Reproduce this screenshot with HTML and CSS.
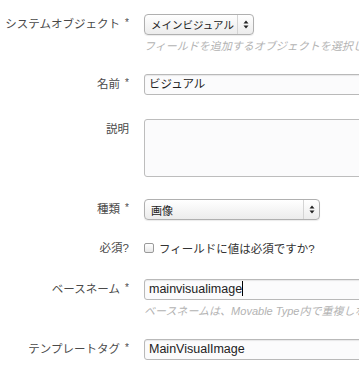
FILE: index.html
```html
<!DOCTYPE html>
<html lang="ja">
<head>
  <meta charset="UTF-8">
  <title>フィールドの編集</title>
  <link rel="stylesheet" href="styles.css">
</head>
<body>
  <form class="field-form">
    <!-- システムオブジェクト -->
    <div class="row row-obj">
      <label class="label">システムオブジェクト <span class="req">*</span></label>
      <div class="field">
        <div class="select select-obj">
          <span class="select-text">メインビジュアル</span>
          <span class="select-arrows">
            <svg width="6" height="9" viewBox="0 0 6 9"><path d="M3 0.5 L5.5 3.5 H0.5 Z M3 8.5 L5.5 5.5 H0.5 Z" fill="#222"/></svg>
          </span>
        </div>
        <p class="hint">フィールドを追加するオブジェクトを選択してください。</p>
      </div>
    </div>

    <!-- 名前 -->
    <div class="row row-name">
      <label class="label">名前 <span class="req">*</span></label>
      <div class="field">
        <div class="input">ビジュアル</div>
      </div>
    </div>

    <!-- 説明 -->
    <div class="row row-desc">
      <label class="label">説明</label>
      <div class="field">
        <div class="textarea"></div>
      </div>
    </div>

    <!-- 種類 -->
    <div class="row row-type">
      <label class="label">種類 <span class="req">*</span></label>
      <div class="field">
        <div class="select select-type">
          <span class="select-text">画像</span>
          <span class="select-arrows">
            <svg width="6" height="9" viewBox="0 0 6 9"><path d="M3 0.5 L5.5 3.5 H0.5 Z M3 8.5 L5.5 5.5 H0.5 Z" fill="#222"/></svg>
          </span>
        </div>
      </div>
    </div>

    <!-- 必須 -->
    <div class="row row-required">
      <label class="label">必須?</label>
      <div class="field check">
        <span class="checkbox"></span>
        <span class="check-text">フィールドに値は必須ですか?</span>
      </div>
    </div>

    <!-- ベースネーム -->
    <div class="row row-base">
      <label class="label">ベースネーム <span class="req">*</span></label>
      <div class="field">
        <div class="input input-latin">mainvisualimage<span class="caret"></span></div>
        <p class="hint">ベースネームは、Movable Type内で重複しないようにしてください。</p>
      </div>
    </div>

    <!-- テンプレートタグ -->
    <div class="row row-tag">
      <label class="label">テンプレートタグ <span class="req">*</span></label>
      <div class="field">
        <div class="input input-latin">MainVisualImage</div>
      </div>
    </div>
  </form>
</body>
</html>
```

FILE: styles.css
```css
/* General Styles */
html, body {
  margin: 0;
  padding: 0;
  overflow: hidden;
}

body {
  font-family: "Liberation Sans", "Noto Sans CJK JP", sans-serif;
  background-color: #fff;
  color: #333;
  width: 359px;
  height: 365px;
}

.field-form {
  padding-top: 14px;
}

.row {
  display: grid;
  grid-template-columns: 129px 420px;
  column-gap: 15px;
  align-items: start;
}

.label {
  text-align: right;
  font-size: 11.5px;
  color: #4a4a4a;
  line-height: 20px;
  white-space: nowrap;
}

.req {
  font-size: 10px;
  position: relative;
  top: -2px;
  margin-left: 2px;
}

.field {
  min-width: 0;
}

/* Text inputs */
.input {
  box-sizing: border-box;
  height: 21px;
  border: 1px solid #b9b9b9;
  border-radius: 3px;
  background-color: #fbfbfc;
  box-shadow: inset 0 1px 1px rgba(0, 0, 0, 0.08);
  padding: 0 4px;
  font-size: 11.5px;
  line-height: 19px;
  color: #222;
}

.input-latin {
  font-size: 12.5px;
}

.caret {
  display: inline-block;
  width: 1px;
  height: 15px;
  background-color: #000;
  vertical-align: -3px;
}

.textarea {
  box-sizing: border-box;
  height: 58px;
  border: 1px solid #bdbdbd;
  border-radius: 3px;
  background-color: #fbfbfc;
}

/* Select boxes */
.select {
  box-sizing: border-box;
  display: flex;
  align-items: center;
  height: 21px;
  border: 1px solid #b0b0b0;
  border-radius: 4px;
  background: linear-gradient(#ffffff, #ececec);
  box-shadow: 0 1px 1px rgba(0, 0, 0, 0.08);
  font-size: 10.5px;
  color: #222;
}

.select-obj {
  width: 110px;
}

.select-type {
  width: 176px;
  font-size: 11px;
}

.select-text {
  flex: 1;
  padding-left: 6px;
  white-space: nowrap;
  overflow: hidden;
}

.select-arrows {
  width: 15px;
  height: 100%;
  border-left: 1px solid #d4d4d4;
  display: flex;
  align-items: center;
  justify-content: center;
}

.hint {
  margin: 4px 0 0;
  font-size: 11px;
  font-style: italic;
  color: #b3b3b3;
  white-space: nowrap;
  line-height: 14px;
}

/* Checkbox row */
.check {
  display: flex;
  align-items: center;
  height: 20px;
}

.checkbox {
  box-sizing: border-box;
  width: 10px;
  height: 10px;
  border: 1px solid #9a9a9a;
  border-radius: 2px;
  background: linear-gradient(#ffffff, #e8e8e8);
  margin-right: 5px;
}

.check-text {
  font-size: 11.5px;
  color: #333;
}

/* Row spacing */
.row-obj { margin-bottom: 21px; }
.row-name { margin-bottom: 24px; }
.row-desc { margin-bottom: 22px; }
.row-type { margin-bottom: 18px; }
.row-required { margin-bottom: 21px; }
.row-base { margin-bottom: 21px; }
.row-base .label, .row-name .label, .row-tag .label { line-height: 21px; }
```
